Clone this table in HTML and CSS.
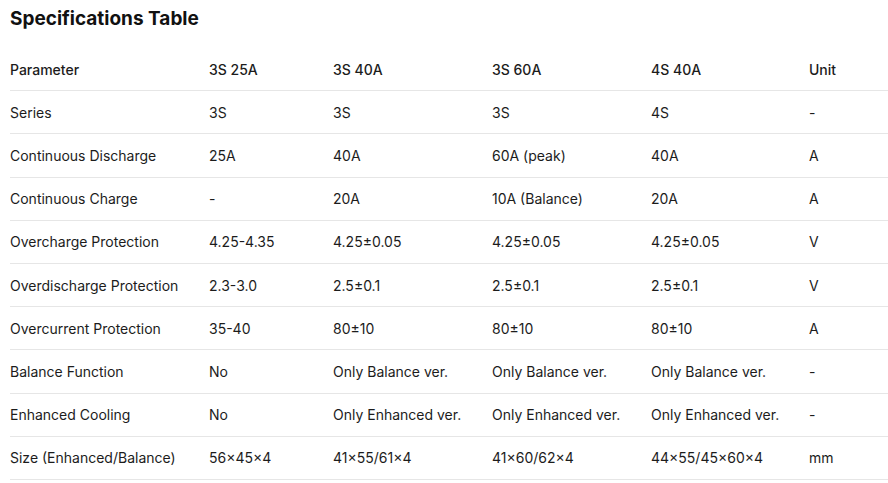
FILE: index.html
```html
<!DOCTYPE html>
<html lang="en">
<head>
<meta charset="utf-8">
<title>Specifications Table</title>
<link rel="stylesheet" href="styles.css">
</head>
<body>
<main class="page">
  <h2 class="title">Specifications Table</h2>
  <table class="spec">
    <colgroup>
      <col class="c1"><col class="c2"><col class="c3"><col class="c4"><col class="c5"><col class="c6">
    </colgroup>
    <thead>
      <tr><th>Parameter</th><th>3S 25A</th><th>3S 40A</th><th>3S 60A</th><th>4S 40A</th><th>Unit</th></tr>
    </thead>
    <tbody>
      <tr><td>Series</td><td>3S</td><td>3S</td><td>3S</td><td>4S</td><td>-</td></tr>
      <tr><td>Continuous Discharge</td><td>25A</td><td>40A</td><td>60A (peak)</td><td>40A</td><td>A</td></tr>
      <tr><td>Continuous Charge</td><td>-</td><td>20A</td><td>10A (Balance)</td><td>20A</td><td>A</td></tr>
      <tr><td>Overcharge Protection</td><td>4.25-4.35</td><td>4.25±0.05</td><td>4.25±0.05</td><td>4.25±0.05</td><td>V</td></tr>
      <tr><td>Overdischarge Protection</td><td>2.3-3.0</td><td>2.5±0.1</td><td>2.5±0.1</td><td>2.5±0.1</td><td>V</td></tr>
      <tr><td>Overcurrent Protection</td><td>35-40</td><td>80±10</td><td>80±10</td><td>80±10</td><td>A</td></tr>
      <tr><td>Balance Function</td><td>No</td><td>Only Balance ver.</td><td>Only Balance ver.</td><td>Only Balance ver.</td><td>-</td></tr>
      <tr><td>Enhanced Cooling</td><td>No</td><td>Only Enhanced ver.</td><td>Only Enhanced ver.</td><td>Only Enhanced ver.</td><td>-</td></tr>
      <tr><td>Size (Enhanced/Balance)</td><td>56×45×4</td><td>41×55/61×4</td><td>41×60/62×4</td><td>44×55/45×60×4</td><td>mm</td></tr>
    </tbody>
  </table>
</main>
</body>
</html>
```

FILE: styles.css
```css
html, body {
  margin: 0;
  padding: 0;
  background: #ffffff;
}
body {
  font-family: Inter, "Noto Sans", "Liberation Sans", sans-serif;
  color: #1c1c1c;
  overflow: hidden;
}
.page {
  padding: 5px 0 0 10px;
}
.title {
  margin: 0 0 16px;
  font-size: 19px;
  line-height: 27px;
  font-weight: 700;
  color: #111111;
}
.spec {
  width: 878px;
  border-collapse: collapse;
  table-layout: fixed;
  font-size: 14px;
  line-height: 18px;
}
.c1 { width: 199px; }
.c2 { width: 124px; }
.c3 { width: 159px; }
.c4 { width: 159px; }
.c5 { width: 158px; }
.c6 { width: 79px; }
.spec th,
.spec td {
  text-align: left;
  font-weight: 400;
  padding: 12.6px 0 11.6px;
  border-bottom: 1px solid #e6e6e6;
  white-space: nowrap;
}
.spec th {
  font-weight: 500;
}
```
